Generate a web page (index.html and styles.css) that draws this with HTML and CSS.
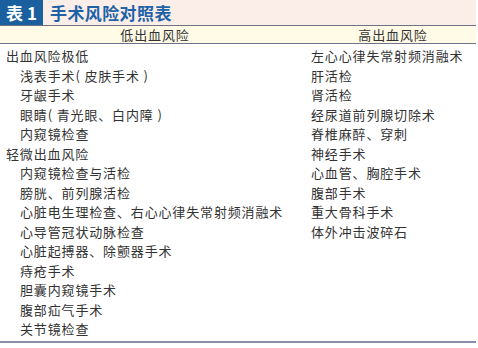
FILE: index.html
```html
<!DOCTYPE html>
<html lang="zh">
<head>
<meta charset="utf-8">
<link rel="stylesheet" href="styles.css">
</head>
<body>
<div class="page">
  <div class="title-bar">
    <span class="badge">表 1</span>
    <span class="title">手术风险对照表</span>
  </div>
  <div class="head-row">
    <div class="head-cell left">低出血风险</div>
    <div class="head-cell right">高出血风险</div>
  </div>
  <div class="body-row">
    <ul class="col left">
      <li class="cat">出血风险极低</li>
      <li class="sub">浅表手术( 皮肤手术 )</li>
      <li class="sub">牙龈手术</li>
      <li class="sub">眼睛( 青光眼、白内障 )</li>
      <li class="sub">内窥镜检查</li>
      <li class="cat">轻微出血风险</li>
      <li class="sub">内窥镜检查与活检</li>
      <li class="sub">膀胱、前列腺活检</li>
      <li class="sub">心脏电生理检查、右心心律失常射频消融术</li>
      <li class="sub">心导管冠状动脉检查</li>
      <li class="sub">心脏起搏器、除颤器手术</li>
      <li class="sub">痔疮手术</li>
      <li class="sub">胆囊内窥镜手术</li>
      <li class="sub">腹部疝气手术</li>
      <li class="sub">关节镜检查</li>
    </ul>
    <ul class="col right">
      <li>左心心律失常射频消融术</li>
      <li>肝活检</li>
      <li>肾活检</li>
      <li>经尿道前列腺切除术</li>
      <li>脊椎麻醉、穿刺</li>
      <li>神经手术</li>
      <li>心血管、胸腔手术</li>
      <li>腹部手术</li>
      <li>重大骨科手术</li>
      <li>体外冲击波碎石</li>
    </ul>
  </div>
</div>
</body>
</html>
```

FILE: styles.css
```css
html, body {
  margin: 0;
  padding: 0;
  background: #ffffff;
}
.page {
  width: 476px;
  font-family: "Noto Sans CJK SC", "Noto Sans", sans-serif;
  color: #333333;
}
.title-bar {
  display: flex;
  align-items: center;
  height: 25px;
  background: #fbeee8;
  border-bottom: 1px solid #6e7286;
}
.badge {
  display: flex;
  align-items: center;
  justify-content: center;
  width: 43px;
  height: 25px;
  background: #1a5f9e;
  color: #ffffff;
  font-size: 17px;
  font-weight: 700;
  line-height: 1;
}
.title {
  margin-left: 7px;
  color: #1e63a6;
  font-size: 17px;
  font-weight: 700;
  letter-spacing: 0.4px;
  line-height: 1;
}
.head-row {
  display: grid;
  grid-template-columns: 310px 1fr;
  height: 17px;
  background: #fffbe7;
  border-bottom: 1px solid #6e7286;
}
.head-cell {
  text-align: center;
  font-size: 13px;
  line-height: 17px;
  letter-spacing: 0.9px;
  color: #333333;
}
.body-row {
  display: grid;
  grid-template-columns: 310px 1fr;
  padding-top: 2px;
  padding-bottom: 2px;
  border-bottom: 2px solid #8a8ea8;
}
.col {
  list-style: none;
  margin: 0;
  padding: 0;
}
.col li {
  font-size: 13px;
  line-height: 19.5px;
  height: 19.5px;
  letter-spacing: 0.85px;
  white-space: nowrap;
}
.col .cat {
  padding-left: 6px;
}
.col .sub {
  padding-left: 20px;
}
.col.right li {
  padding-left: 1px;
}
```
